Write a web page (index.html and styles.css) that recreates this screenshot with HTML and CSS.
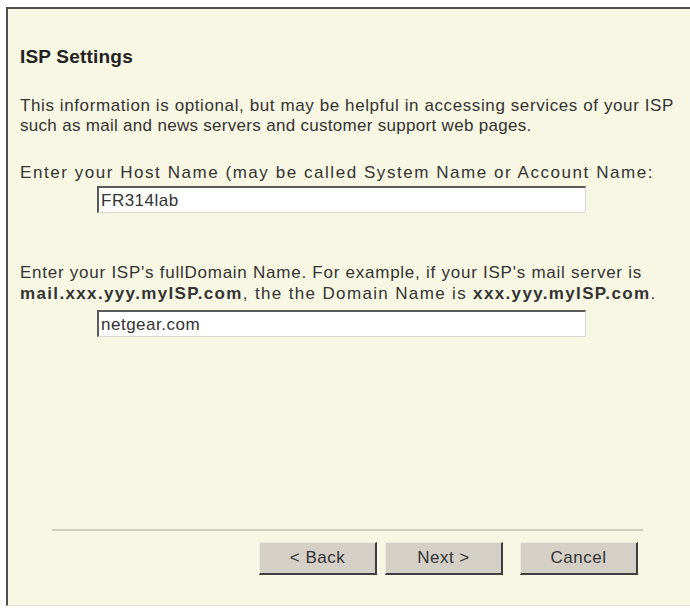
FILE: index.html
```html
<!DOCTYPE html>
<html lang="en">
<head>
    <meta charset="UTF-8">
    <title>ISP Settings</title>
    <link rel="stylesheet" href="styles.css">
</head>
<body>
    <div class="wizard">
        <h2>ISP Settings</h2>

        <p class="intro">
            <span class="line wide">This information is optional, but may be helpful in accessing services of your ISP</span>
            <span class="line">such as mail and news servers and customer support web pages.</span>
        </p>

        <div class="field">
            <label for="host" class="line widest">Enter your Host Name (may be called System Name or Account Name:</label>
            <input type="text" id="host" value="FR314lab">
        </div>

        <div class="field domain">
            <label for="domain">
                <span class="line wider">Enter your ISP's fullDomain Name. For example, if your ISP's mail server is</span>
                <span class="line bolder"><b>mail.xxx.yyy.myISP.com</b>, the the Domain Name is <b>xxx.yyy.myISP.com</b>.</span>
            </label>
            <input type="text" id="domain" value="netgear.com">
        </div>

        <div class="footer">
            <hr>
            <div class="buttons">
                <button type="button">&lt; Back</button>
                <button type="button">Next &gt;</button>
                <button type="button" class="cancel">Cancel</button>
            </div>
        </div>
    </div>
</body>
</html>
```

FILE: styles.css
```css
html, body {
    margin: 0;
    background-color: #ffffff;
}

body {
    padding: 7px 0 3px 6px;
    font-family: "Liberation Sans", Arial, sans-serif;
    font-size: 17px;
    color: #333;
}

.wizard {
    height: 599px;
    box-sizing: border-box;
    background-color: #f8f7e4;
    border-top: 2px solid #4e4e4e;
    border-left: 2px solid #4e4e4e;
    border-bottom: 1px solid #e4e4d6;
    padding: 37px 10px 0 12px;
    display: flex;
    flex-direction: column;
}

h2 {
    margin: 0;
    font-size: 19px;
    letter-spacing: 0.2px;
    font-weight: bold;
    color: #222;
}

.line {
    display: block;
    white-space: nowrap;
    letter-spacing: 0.3px;
}

.line.wide {
    letter-spacing: 0.6px;
}

.line.wider {
    letter-spacing: 0.75px;
}

.line.bolder {
    letter-spacing: 1.35px;
}

.line.widest {
    letter-spacing: 1.55px;
}

.intro {
    margin: 28px 0 0;
    line-height: 20px;
}

.field {
    margin-top: 26px;
}

.field label {
    display: block;
    line-height: 21px;
}

.field input {
    display: block;
    margin: 3px 0 0 77px;
    width: 489px;
    height: 27px;
    box-sizing: border-box;
    padding: 2px 2px 0;
    font-family: inherit;
    font-size: 17px;
    letter-spacing: 0.5px;
    color: #333;
    background-color: #fff;
    border-top: 2px solid #5a5a5a;
    border-left: 2px solid #5a5a5a;
    border-right: 1px solid #d8d8d0;
    border-bottom: 1px solid #d8d8d0;
    outline: none;
}

.domain {
    margin-top: 49px;
}

.domain input {
    margin-top: 6px;
}

.footer {
    margin-top: auto;
    padding: 0 37px 30px 32px;
}

hr {
    margin: 0;
    border: none;
    border-top: 2px solid #cfd0bc;
}

.buttons {
    display: flex;
    justify-content: flex-end;
    gap: 8px;
    margin-top: 11px;
    padding-right: 5px;
}

button {
    width: 118px;
    height: 33px;
    font-family: inherit;
    font-size: 17px;
    letter-spacing: 0.5px;
    color: #333;
    background-color: #d4d0c8;
    border: none;
    border-right: 2px solid #3e3e3e;
    border-bottom: 2px solid #3e3e3e;
    border-top: 1px solid #ece9e0;
    border-left: 1px solid #ece9e0;
    padding: 0;
}

.cancel {
    margin-left: 9px;
}
```
